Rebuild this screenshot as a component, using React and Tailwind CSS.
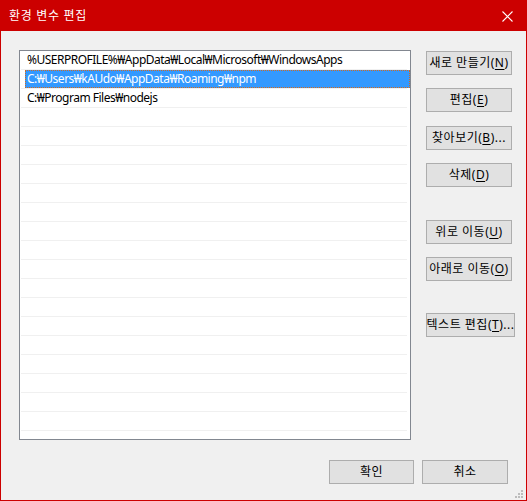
import React from "react";

const ENTRIES = [
  "%USERPROFILE%\u20A9AppData\u20A9Local\u20A9Microsoft\u20A9WindowsApps",
  "C:\u20A9Users\u20A9kAUdo\u20A9AppData\u20A9Roaming\u20A9npm",
  "C:\u20A9Program Files\u20A9nodejs",
];

const FONT = { fontFamily: '"Noto Sans", "Noto Sans CJK KR", sans-serif' };

function Btn({ label, mnemonic, suffix = "", className = "" }) {
  return (
    <button
      className={`h-[24px] bg-[#e1e1e1] border border-[#adadad] text-[12px] tracking-[0.5px] text-black leading-none flex items-center justify-center whitespace-nowrap ${className}`}
    >
      <span>
        {label}
        {mnemonic && (
          <>
            (<span className="underline underline-offset-2">{mnemonic}</span>)
          </>
        )}
        {suffix}
      </span>
    </button>
  );
}

export default function App() {
  const rows = Array.from({ length: 21 }, (_, i) => ENTRIES[i] || "");

  return (
    <div
      className="relative w-[527px] h-[501px] border border-[#cc0000] bg-[#f0f0f0] flex flex-col overflow-hidden"
      style={FONT}
    >
      {/* Title bar */}
      <div className="h-[30px] bg-[#cc0000] flex items-center justify-between pl-[8px] pr-[13px] shrink-0">
        <span className="text-white text-[12px] tracking-[0.7px]">환경 변수 편집</span>
        <svg width="11" height="11" viewBox="0 0 11 11">
          <path d="M0.5 0.5 L10.5 10.5 M10.5 0.5 L0.5 10.5" stroke="#fff" strokeWidth="1.1" />
        </svg>
      </div>

      {/* Body */}
      <div className="flex pl-[18px] pt-[19px]">
        {/* List */}
        <div className="w-[392px] h-[390px] bg-white border border-[#828790] overflow-hidden">
          {rows.map((text, i) => {
            const selected = i === 1;
            return (
              <div key={i} className="h-[19px] flex flex-col">
                {selected ? (
                  <div className="h-[18px] ml-[5px] bg-[#3399ff] outline outline-1 outline-dotted outline-[#d2691e] -outline-offset-1 text-white text-[12px] tracking-[-0.5px] leading-[18px] pl-[2px] whitespace-nowrap">
                    {text}
                  </div>
                ) : (
                  <div className="h-[18px] pl-[7px] text-[12px] tracking-[-0.5px] leading-[18px] text-black whitespace-nowrap">
                    {text}
                  </div>
                )}
                <div className="h-[1px] ml-[1px] w-[386px] bg-[#f0f0f0]" />
              </div>
            );
          })}
        </div>

        {/* Buttons column */}
        <div className="flex flex-col ml-[15px] pt-[1px]">
          <Btn label="새로 만들기" mnemonic="N" className="w-[86px]" />
          <Btn label="편집" mnemonic="E" className="w-[86px] mt-[13px]" />
          <Btn label="찾아보기" mnemonic="B" suffix="..." className="w-[86px] mt-[14px]" />
          <Btn label="삭제" mnemonic="D" className="w-[86px] mt-[13px]" />
          <Btn label="위로 이동" mnemonic="U" className="w-[86px] mt-[33px]" />
          <Btn label="아래로 이동" mnemonic="O" className="w-[86px] mt-[13px]" />
          <Btn label="텍스트 편집" mnemonic="T" suffix="..." className="w-[89px] mt-[32px]" />
        </div>
      </div>

      {/* Bottom buttons */}
      <div className="flex pl-[328px] pt-[20px] gap-[8px]">
        <Btn label="확인" className="w-[85px]" />
        <Btn label="취소" className="w-[86px]" />
      </div>

      {/* Resize grip */}
      <svg className="absolute right-[3px] bottom-[2px]" width="8" height="8" viewBox="0 0 8 8">
        <rect x="6" y="0" width="2" height="2" fill="#bcbcbc" />
        <rect x="3" y="3" width="2" height="2" fill="#bcbcbc" />
        <rect x="6" y="3" width="2" height="2" fill="#bcbcbc" />
        <rect x="0" y="6" width="2" height="2" fill="#bcbcbc" />
        <rect x="3" y="6" width="2" height="2" fill="#bcbcbc" />
        <rect x="6" y="6" width="2" height="2" fill="#bcbcbc" />
      </svg>
    </div>
  );
}
